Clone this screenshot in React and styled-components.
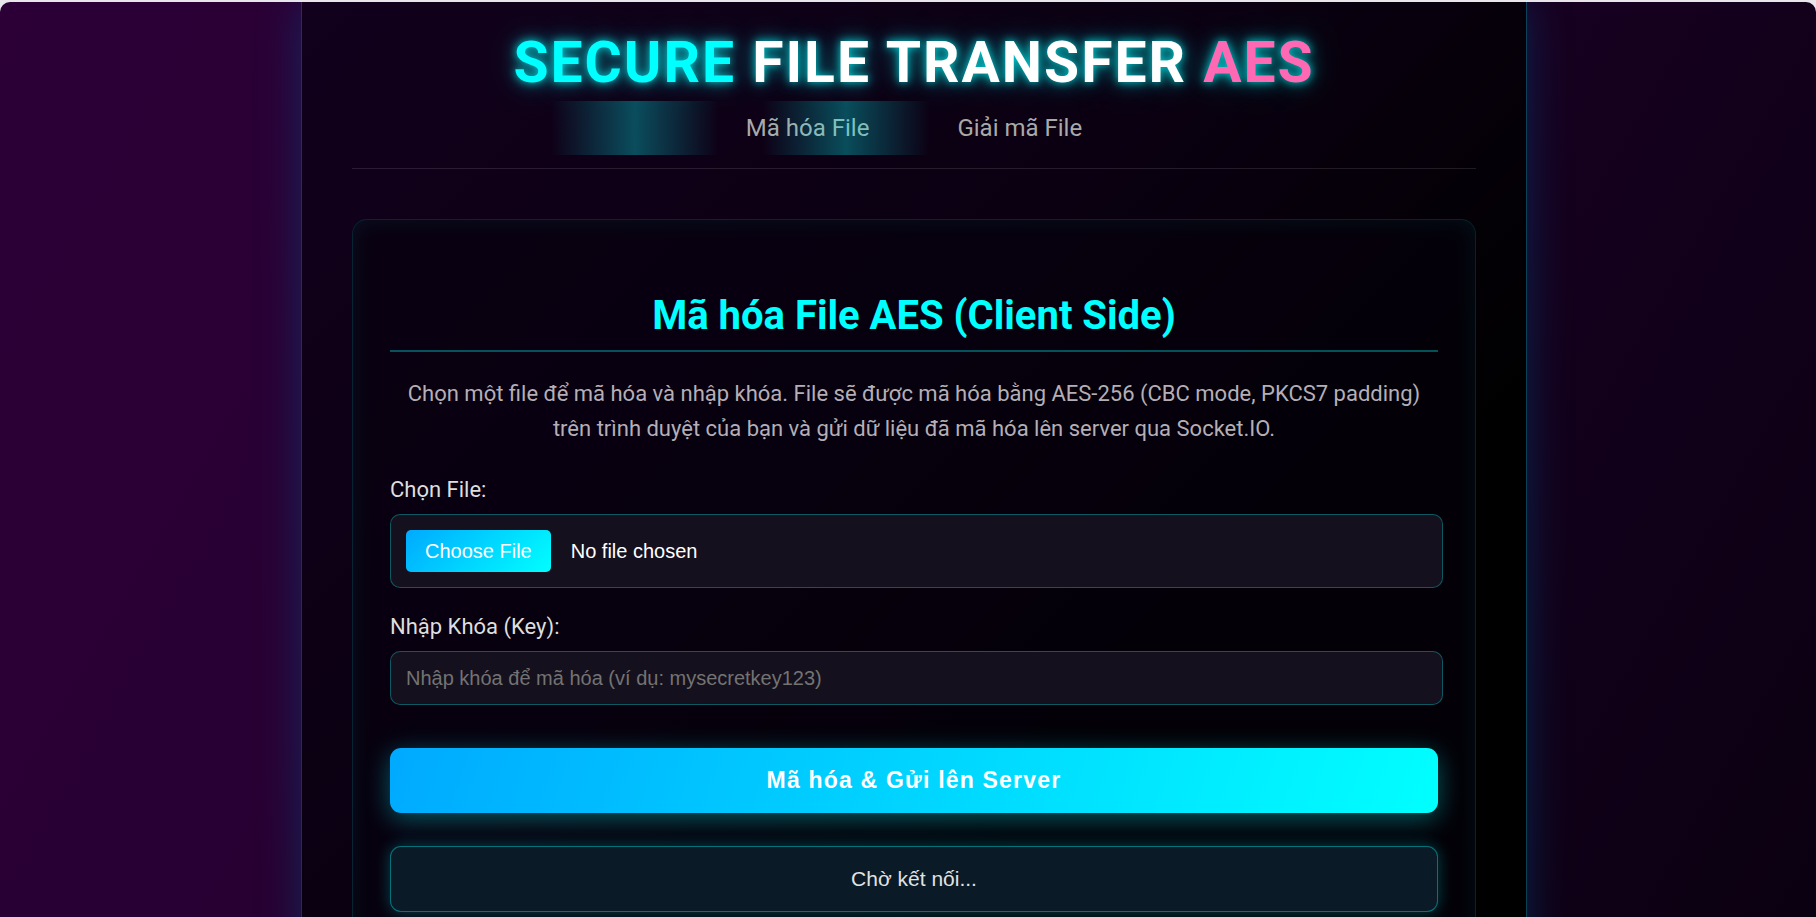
import React from 'react';
import styled, { createGlobalStyle } from 'styled-components';

const GlobalStyle = createGlobalStyle`
  html, body { margin: 0; padding: 0; }
  html { background: #e8e5eb; }
  body {
    padding-top: 2px;
    overflow: hidden;
    font-family: Roboto, "Noto Sans", sans-serif;
  }
  * { box-sizing: border-box; }
`;

const Page = styled.div`
  min-height: 915px;
  display: flex;
  padding-left: 301px;
  border-radius: 10px 10px 0 0;
  overflow: hidden;
  background: linear-gradient(120deg, #2c0037 0%, #290033 30%, #14001d 72%, #0a0010 100%);
`;

const Shell = styled.main`
  width: 1226px;
  min-height: 1000px;
  padding: 27px 50px 0;
  border-left: 1px solid rgba(0, 190, 210, 0.35);
  border-right: 1px solid rgba(0, 190, 210, 0.35);
  background: linear-gradient(135deg, #12001c 0%, #0b0012 42%, #000000 74%);
  box-shadow: 0 0 40px rgba(0, 80, 140, 0.45);
`;

const Header = styled.header`
  text-align: center;
  border-bottom: 1px solid rgba(255, 255, 255, 0.11);
  padding-bottom: 13px;
`;

const Title = styled.h1`
  margin: 0;
  font-family: Roboto, sans-serif;
  font-size: 57px;
  font-weight: 700;
  line-height: 67px;
  letter-spacing: 2px;
  color: #ffffff;
  text-shadow: 0 0 8px rgba(0, 255, 255, 0.75), 0 0 18px rgba(0, 255, 255, 0.45), 0 0 34px rgba(0, 255, 255, 0.25);
`;

const Accent = styled.span`
  color: ${(p) => p.$color};
`;

const TabBar = styled.nav`
  display: flex;
  justify-content: center;
  margin-top: 5px;
`;

const Tab = styled.button`
  position: relative;
  padding: 15px 44px;
  border: none;
  background: none;
  font-family: Roboto, sans-serif;
  font-size: 24px;
  line-height: 24px;
  color: #a9a9a9;
  cursor: pointer;

  &::before {
    content: '';
    position: absolute;
    top: 0;
    bottom: 0;
    left: -151px;
    width: 168px;
    pointer-events: none;
    background: linear-gradient(90deg, rgba(0, 255, 255, 0) 0%, rgba(0, 255, 255, 0.3) 50%, rgba(0, 255, 255, 0) 100%);
  }
`;

const Card = styled.section`
  margin-top: 50px;
  padding: 72px 37px 40px;
  border: 1px solid rgba(0, 255, 255, 0.14);
  border-radius: 15px;
  background: rgba(6, 0, 12, 0.55);
  box-shadow: inset 0 0 22px rgba(0, 255, 255, 0.07);
`;

const CardTitle = styled.h2`
  margin: 0;
  padding-bottom: 10px;
  border-bottom: 2px solid rgba(0, 255, 255, 0.32);
  text-align: center;
  font-family: Roboto, sans-serif;
  font-size: 40px;
  font-weight: 700;
  line-height: 48px;
  color: #00ffff;
`;

const Description = styled.p`
  margin: 24px 0 31px;
  text-align: center;
  font-family: Roboto, sans-serif;
  font-size: 22px;
  line-height: 35px;
  color: #b4afb6;
`;

const Group = styled.div`
  margin-bottom: 26px;
`;

const Label = styled.label`
  display: block;
  margin-bottom: 11px;
  font-family: Roboto, sans-serif;
  font-size: 22px;
  line-height: 26px;
  color: #dedede;
`;

const FileField = styled.div`
  display: flex;
  align-items: center;
  gap: 20px;
  width: calc(100% + 5px);
  padding: 15px;
  border: 1px solid rgba(0, 255, 255, 0.3);
  border-radius: 10px;
  background: #15101d;
`;

const ChooseButton = styled.button`
  padding: 10px 19px;
  border: none;
  border-radius: 5px;
  background: linear-gradient(135deg, #00aaff 0%, #00ffff 100%);
  font-family: "Liberation Sans", Arial, sans-serif;
  font-size: 20px;
  line-height: 22px;
  color: #ffffff;
  cursor: pointer;
`;

const FileName = styled.span`
  font-family: "Liberation Sans", Arial, sans-serif;
  font-size: 20px;
  color: #ffffff;
`;

const KeyInput = styled.input`
  display: block;
  width: calc(100% + 5px);
  padding: 15px;
  border: 1px solid rgba(0, 255, 255, 0.3);
  border-radius: 10px;
  background: #15101d;
  font-family: "Liberation Sans", Arial, sans-serif;
  font-size: 20px;
  line-height: 22px;
  color: #ffffff;
  outline: none;

  &::placeholder {
    color: #737373;
  }
`;

const SubmitButton = styled.button`
  display: block;
  width: 100%;
  margin-top: 43px;
  padding: 20px;
  border: none;
  border-radius: 11px;
  background: linear-gradient(110deg, #00aaff 0%, #00ffff 100%);
  box-shadow: 0 6px 26px rgba(0, 255, 255, 0.35);
  font-family: "Liberation Sans", Arial, sans-serif;
  font-size: 23px;
  font-weight: 700;
  line-height: 25px;
  letter-spacing: 1.2px;
  color: #ffffff;
  cursor: pointer;
`;

const Status = styled.div`
  margin-top: 33px;
  padding: 20px;
  border: 1px solid rgba(0, 255, 255, 0.38);
  border-radius: 11px;
  background: #0a1a26;
  box-shadow: 0 0 16px rgba(0, 255, 255, 0.28);
  text-align: center;
  font-family: "Liberation Sans", Arial, sans-serif;
  font-size: 21px;
  line-height: 24px;
  color: #e2e2e2;
`;

export default function App() {
  return (
    <>
      <GlobalStyle />
      <Page>
        <Shell>
          <Header>
            <Title>
              <Accent $color="#00ffff">SECURE</Accent> FILE TRANSFER <Accent $color="#ff69b4">AES</Accent>
            </Title>
            <TabBar>
              <Tab>Mã hóa File</Tab>
              <Tab>Giải mã File</Tab>
            </TabBar>
          </Header>
          <Card>
            <CardTitle>Mã hóa File AES (Client Side)</CardTitle>
            <Description>
              Chọn một file để mã hóa và nhập khóa. File sẽ được mã hóa bằng AES-256 (CBC mode, PKCS7 padding)
              <br />
              trên trình duyệt của bạn và gửi dữ liệu đã mã hóa lên server qua Socket.IO.
            </Description>
            <Group>
              <Label>Chọn File:</Label>
              <FileField>
                <ChooseButton type="button">Choose File</ChooseButton>
                <FileName>No file chosen</FileName>
              </FileField>
            </Group>
            <Group>
              <Label htmlFor="key">Nhập Khóa (Key):</Label>
              <KeyInput id="key" type="text" placeholder="Nhập khóa để mã hóa (ví dụ: mysecretkey123)" />
            </Group>
            <SubmitButton type="button">Mã hóa &amp; Gửi lên Server</SubmitButton>
            <Status>Chờ kết nối...</Status>
          </Card>
        </Shell>
      </Page>
    </>
  );
}
